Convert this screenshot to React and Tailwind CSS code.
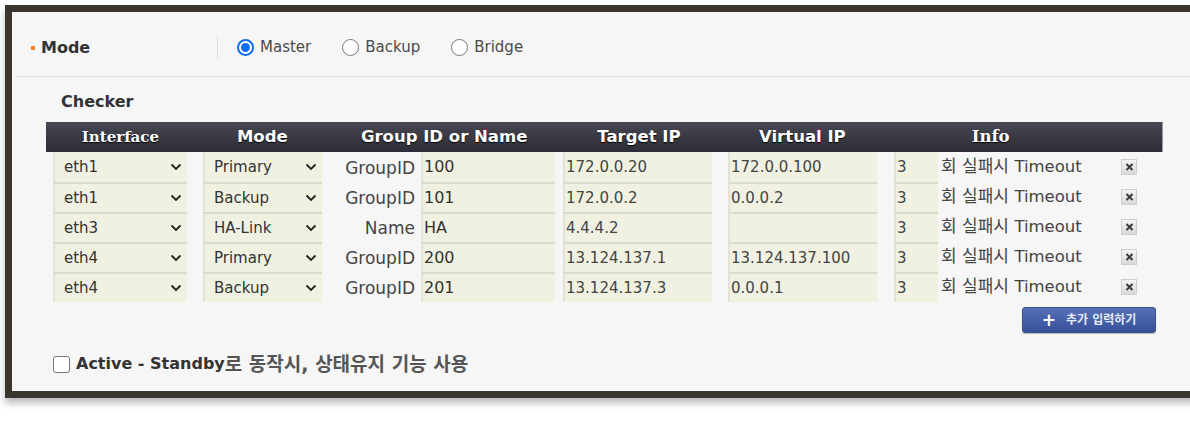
import { useState } from "react";

const rows = [
  { iface: "eth1", mode: "Primary", label: "GroupID", name: "100", target: "172.0.0.20", vip: "172.0.0.100", count: "3" },
  { iface: "eth1", mode: "Backup", label: "GroupID", name: "101", target: "172.0.0.2", vip: "0.0.0.2", count: "3" },
  { iface: "eth3", mode: "HA-Link", label: "Name", name: "HA", target: "4.4.4.2", vip: "", count: "3" },
  { iface: "eth4", mode: "Primary", label: "GroupID", name: "200", target: "13.124.137.1", vip: "13.124.137.100", count: "3" },
  { iface: "eth4", mode: "Backup", label: "GroupID", name: "201", target: "13.124.137.3", vip: "0.0.0.1", count: "3" },
];

function Chevron() {
  return (
    <svg width="12" height="8" viewBox="0 0 12 8" className="shrink-0">
      <polyline points="1.5,1.5 6,6 10.5,1.5" fill="none" stroke="#222" strokeWidth="1.8" />
    </svg>
  );
}

function Radio({ checked, label, onClick }) {
  return (
    <button onClick={onClick} className="flex items-center gap-[6px]">
      {checked ? (
        <span className="w-[17px] h-[17px] rounded-full border-2 border-[#0b6cf5] flex items-center justify-center bg-white">
          <span className="w-[9px] h-[9px] rounded-full bg-[#0b6cf5]" />
        </span>
      ) : (
        <span className="w-[17px] h-[17px] rounded-full border-[1.5px] border-[#767676] bg-white" />
      )}
      <span className="text-[15px] text-[#4a4a4a]">{label}</span>
    </button>
  );
}

function Cell({ children, className = "", first }) {
  return (
    <div
      className={`h-[30px] bg-[#f1f1e2] border-l-2 border-[#e3e3d5] flex items-center ${
        first ? "" : "border-t-2 border-t-[#dadacd]"
      } ${className}`}
    >
      {children}
    </div>
  );
}

export default function App() {
  const [mode, setMode] = useState("Master");
  const [keep, setKeep] = useState(false);

  return (
    <div
      className="w-[1190px] h-[437px] bg-white overflow-hidden pt-[5px] pl-[5px]"
      style={{ fontFamily: '"DejaVu Sans", "Noto Sans CJK KR", sans-serif' }}
    >
      <div className="w-[1200px] bg-[#f6f6f6] border-t-[7px] border-l-[7px] border-b-[7px] border-[#3a362f] shadow-[0_5px_7px_rgba(0,0,0,0.28)] pl-[4px]">
        {/* mode row */}
        <div className="h-[65px] flex items-center border-b border-[#dcdcdc] pt-[6px]">
          <div className="flex items-center w-[201px] pl-[15px] pt-[1px]">
            <span className="w-[4px] h-[4px] bg-[#f0862c] mr-[6px]" />
            <span className="text-[16px] font-bold text-[#333]">Mode</span>
          </div>
          <div className="w-px h-[23px] bg-[#dddddd]" />
          <div className="flex items-center gap-[31px] pl-[19px]">
            <Radio checked={mode === "Master"} label="Master" onClick={() => setMode("Master")} />
            <Radio checked={mode === "Backup"} label="Backup" onClick={() => setMode("Backup")} />
            <Radio checked={mode === "Bridge"} label="Bridge" onClick={() => setMode("Bridge")} />
          </div>
        </div>

        {/* checker */}
        <div className="pl-[30px] pr-[22px]">
          <div className="h-[45px] flex items-center pl-[15px] pt-[5px]">
            <span className="text-[16px] font-bold text-[#333]">Checker</span>
          </div>

          <div className="w-[1117px]">
            <div className="h-[30px] flex items-center text-white text-[16.5px] font-bold bg-gradient-to-b from-[#474753] to-[#2d2d37] border-r border-[#9a9a9a] [text-shadow:0_1px_1px_#000]">
              <div className="w-[149px] text-center text-[15px]" style={{ fontFamily: '"DejaVu Serif", serif' }}>Interface</div>
              <div className="w-[135px] text-center">Mode</div>
              <div className="w-[229px] text-center">Group ID or Name</div>
              <div className="w-[161px] text-center">Target IP</div>
              <div className="w-[166px] text-center">Virtual IP</div>
              <div className="w-[211px] text-center" style={{ fontFamily: '"DejaVu Serif", serif' }}>Info</div>
              <div className="w-[66px]" />
            </div>

            {rows.map((r, i) => (
              <div key={i} className="flex h-[30px] text-[15px] text-[#333]">
                <div className="w-[149px] pl-[7px]">
                  <Cell first={i === 0} className="w-[134px] justify-between pl-[9px] pr-[5px]">
                    <span>{r.iface}</span>
                    <Chevron />
                  </Cell>
                </div>
                <div className="w-[135px] pl-[8px]">
                  <Cell first={i === 0} className="w-[119px] justify-between pl-[9px] pr-[5px]">
                    <span>{r.mode}</span>
                    <Chevron />
                  </Cell>
                </div>
                <div className="w-[229px] flex">
                  <div className="w-[85px] h-[30px] flex items-center justify-end pt-[3px] text-[17px] text-[#444]">{r.label}</div>
                  <div className="pl-[6px]">
                    <Cell first={i === 0} className="w-[134px] pl-[1px] text-[16px]">
                      {r.name}
                    </Cell>
                  </div>
                </div>
                <div className="w-[161px] pl-[4px]">
                  <Cell first={i === 0} className="w-[149px] pl-[1px] text-[#444]">
                    {r.target}
                  </Cell>
                </div>
                <div className="w-[166px] pl-[8px]">
                  <Cell first={i === 0} className="w-[149px] pl-[1px] text-[#444]">
                    {r.vip}
                  </Cell>
                </div>
                <div className="w-[211px] pl-[8px] flex">
                  <Cell first={i === 0} className="w-[44px] pl-[1px] text-[#444]">
                    {r.count}
                  </Cell>
                  <div className="h-[30px] flex items-center pl-[3px] text-[#444] whitespace-nowrap">
                    <span className="text-[17px]">회 실패시&nbsp;</span>
                    <span className="text-[16.5px]">Timeout</span>
                  </div>
                </div>
                <div className="w-[66px] pl-[24px] flex items-center">
                  <button className="w-[16px] h-[16px] flex items-center justify-center border border-[#cfcfcf] bg-gradient-to-b from-[#f4f4f4] to-[#d9d9d9]">
                    <svg width="9" height="8" viewBox="0 0 9 8">
                      <path d="M1.5 1 L7.5 7 M7.5 1 L1.5 7" stroke="#3a3a3a" strokeWidth="2" />
                    </svg>
                  </button>
                </div>
              </div>
            ))}

            <div className="flex justify-end pr-[7px] pt-[5px]">
              <button className="w-[134px] h-[26px] rounded-[3px] flex items-center justify-center gap-[10px] bg-gradient-to-b from-[#5670b8] to-[#38509a] border border-[#3a4f8c] shadow-[0_1px_1px_rgba(0,0,0,0.25)]">
                <span className="text-white text-[17px] font-bold leading-none">+</span>
                <span className="text-[#e4eaf8] text-[12px] font-bold">추가 입력하기</span>
              </button>
            </div>
          </div>

          <div className="h-[58px] flex items-center pl-[7px] pt-[4px]">
            <button
              onClick={() => setKeep(!keep)}
              className="w-[17px] h-[17px] rounded-[3px] border-[1.5px] border-[#767676] bg-white mr-[6px]"
            />
            <span className="text-[16px] font-bold text-[#333]">Active - Standby</span>
            <span className="text-[19px] font-semibold text-[#555]">로 동작시, 상태유지 기능 사용</span>
          </div>
        </div>
      </div>
    </div>
  );
}
